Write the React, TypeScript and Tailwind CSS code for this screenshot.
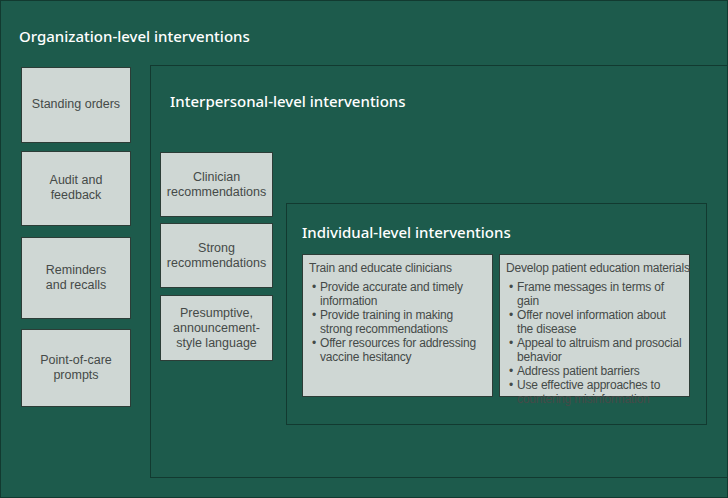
const body = { fontFamily: "'Liberation Sans', Arial, sans-serif" };
const head = { fontFamily: "'Noto Sans', 'Open Sans', sans-serif" };

function Box({ children, className = "" }: { children: React.ReactNode; className?: string }) {
  return (
    <div
      style={body}
      className={`flex items-center justify-center border border-[#2c3d37] bg-[#cfd7d4] px-2 text-center text-[12.5px] leading-[15px] text-[#454a48] ${className}`}
    >
      {children}
    </div>
  );
}

function Card({ title, items }: { title: string; items: string[] }) {
  return (
    <div
      style={body}
      className="h-[143px] w-[191px] border border-[#2c3d37] bg-[#cfd7d4] px-[6px] pt-[6px] text-[12px] leading-[14px] tracking-[-0.2px] text-[#454a48]"
    >
      <div className="mb-[5px] whitespace-nowrap">{title}</div>
      <ul>
        {items.map((t) => (
          <li key={t} className="flex gap-[4px] pl-[3px]">
            <span>•</span>
            <span>{t}</span>
          </li>
        ))}
      </ul>
    </div>
  );
}

export default function App() {
  return (
    <div className="h-[498px] w-[728px] overflow-hidden border border-[#123a30] bg-[#1d5b4c]">
      <h1 style={head} className="pl-[18px] pt-[24px] text-[15px] font-medium text-white">
        Organization-level interventions
      </h1>
      <div className="mt-[17px] flex">
        <div className="ml-[20px] mt-[2px] flex w-[110px] flex-col">
          <Box className="h-[76px]">Standing orders</Box>
          <Box className="mt-[8px] h-[75px] px-6">Audit and feedback</Box>
          <Box className="mt-[11px] h-[82px] px-5">Reminders and recalls</Box>
          <Box className="mt-[10px] h-[78px] px-4">Point-of-care prompts</Box>
        </div>
        <div className="-mr-[10px] ml-[19px] h-[413px] flex-1 border border-[#123a30]">
          <h2 style={head} className="pl-[19px] pt-[24px] text-[15px] font-medium text-white">
            Interpersonal-level interventions
          </h2>
          <div className="mt-[40px] flex">
            <div className="ml-[9px] flex w-[113px] flex-col">
              <Box className="h-[65px]">Clinician recommendations</Box>
              <Box className="mt-[6px] h-[65px] px-3">Strong recommendations</Box>
              <Box className="mt-[7px] h-[66px] px-1">Presumptive, announcement-style language</Box>
            </div>
            <div className="ml-[13px] mt-[51px] h-[222px] w-[421px] border border-[#123a30]">
              <h3 style={head} className="pl-[15px] pt-[17px] text-[15px] font-medium text-white">
                Individual-level interventions
              </h3>
              <div className="ml-[15px] mt-[10px] flex gap-[6px]">
                <Card
                  title="Train and educate clinicians"
                  items={[
                    "Provide accurate and timely information",
                    "Provide training in making strong recommendations",
                    "Offer resources for addressing vaccine hesitancy",
                  ]}
                />
                <Card
                  title="Develop patient education materials"
                  items={[
                    "Frame messages in terms of gain",
                    "Offer novel information about the disease",
                    "Appeal to altruism and prosocial behavior",
                    "Address patient barriers",
                    "Use effective approaches to countering misinformation",
                  ]}
                />
              </div>
            </div>
          </div>
        </div>
      </div>
    </div>
  );
}
